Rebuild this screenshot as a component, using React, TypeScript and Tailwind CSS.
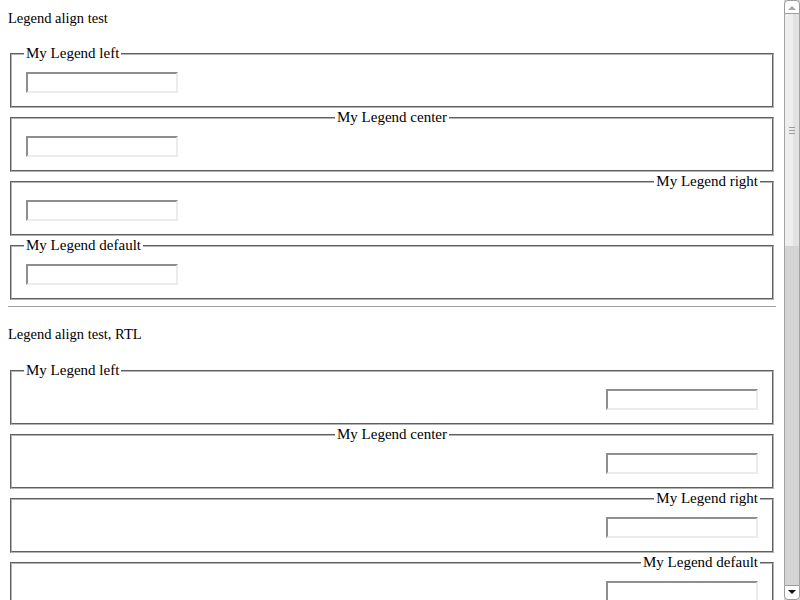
import type { ReactNode } from "react";

type Align = "left" | "center" | "right" | "default";

const LEGEND_LTR: Record<Align, string> = {
  left: "mr-auto",
  center: "mx-auto",
  right: "ml-auto",
  default: "",
};

const LEGEND_RTL: Record<Align, string> = {
  left: "mr-auto ml-0",
  center: "mx-auto",
  right: "ml-auto",
  default: "",
};

const ALIGNS: Align[] = ["left", "center", "right", "default"];

function TextBox() {
  return (
    <input
      type="text"
      className="mx-[2px] block h-[21px] w-[152px] border-2 border-t-[#8e8e8e] border-l-[#8e8e8e] border-b-[#ececec] border-r-[#ececec] bg-white outline-none"
    />
  );
}

function Group({ align, rtl }: { align: Align; rtl?: boolean }) {
  const legendCls = rtl ? LEGEND_RTL[align] : LEGEND_LTR[align];
  return (
    <fieldset className="mx-[2px] mb-[1px] border-2 border-[#b4b4b4] px-[12px] pb-[13px] pt-[10px] [border-style:groove]">
      <legend className={`px-[2px] text-[15px] leading-[17px] ${legendCls}`}>My Legend {align}</legend>
      <TextBox />
    </fieldset>
  );
}

function Section({ title, rtl, children }: { title: string; rtl?: boolean; children?: ReactNode }) {
  return (
    <div dir={rtl ? "rtl" : "ltr"}>
      <p dir="ltr" className="leading-[17px]">
        {title}
      </p>
      <div className={rtl ? "mt-[19px]" : "mt-[18px]"}>
        {ALIGNS.map((a) => (
          <Group key={a} align={a} rtl={rtl} />
        ))}
      </div>
      {children}
    </div>
  );
}

function Scrollbar() {
  return (
    <div className="flex h-[600px] w-[16px] flex-col bg-[#d4d4d4]">
      <div className="flex h-[14px] items-center justify-center rounded-t-[4px] border border-[#9c9c9c] bg-white">
        <svg width="8" height="5" viewBox="0 0 8 5">
          <path d="M0 5 L4 1 L8 5 Z" fill="#a8a8a8" />
        </svg>
      </div>
      <div className="flex h-[232px] items-center justify-center border-x border-[#a4a4a4] bg-[linear-gradient(to_right,#eeeeee_0,#eeeeee_60%,#e2e2e2_60%,#e2e2e2_100%)]">
        <div className="flex flex-col gap-[2px]">
          <div className="h-px w-[6px] bg-[#9c9c9c]" />
          <div className="h-px w-[6px] bg-[#9c9c9c]" />
          <div className="h-px w-[6px] bg-[#9c9c9c]" />
        </div>
      </div>
      <div className="flex-1 border-x border-[#a4a4a4] bg-[#d4d4d4]" />
      <div className="flex h-[15px] items-center justify-center rounded-b-[4px] border border-[#9c9c9c] bg-white">
        <svg width="8" height="5" viewBox="0 0 8 5">
          <path d="M0 0 L8 0 L4 4 Z" fill="#111111" />
        </svg>
      </div>
    </div>
  );
}

export default function App() {
  return (
    <div className="flex h-[600px] w-[800px] overflow-hidden bg-white font-['Liberation_Serif',serif] text-[14.5px] text-black">
      <div className="w-[784px] overflow-hidden px-[8px] pt-[10px]">
        <Section title="Legend align test" />
        <hr className="mx-0 mt-[6px] h-0 border-t border-[#a0a0a0]" />
        <div className="mt-[19px]">
          <Section title="Legend align test, RTL" rtl />
        </div>
      </div>
      <Scrollbar />
    </div>
  );
}
